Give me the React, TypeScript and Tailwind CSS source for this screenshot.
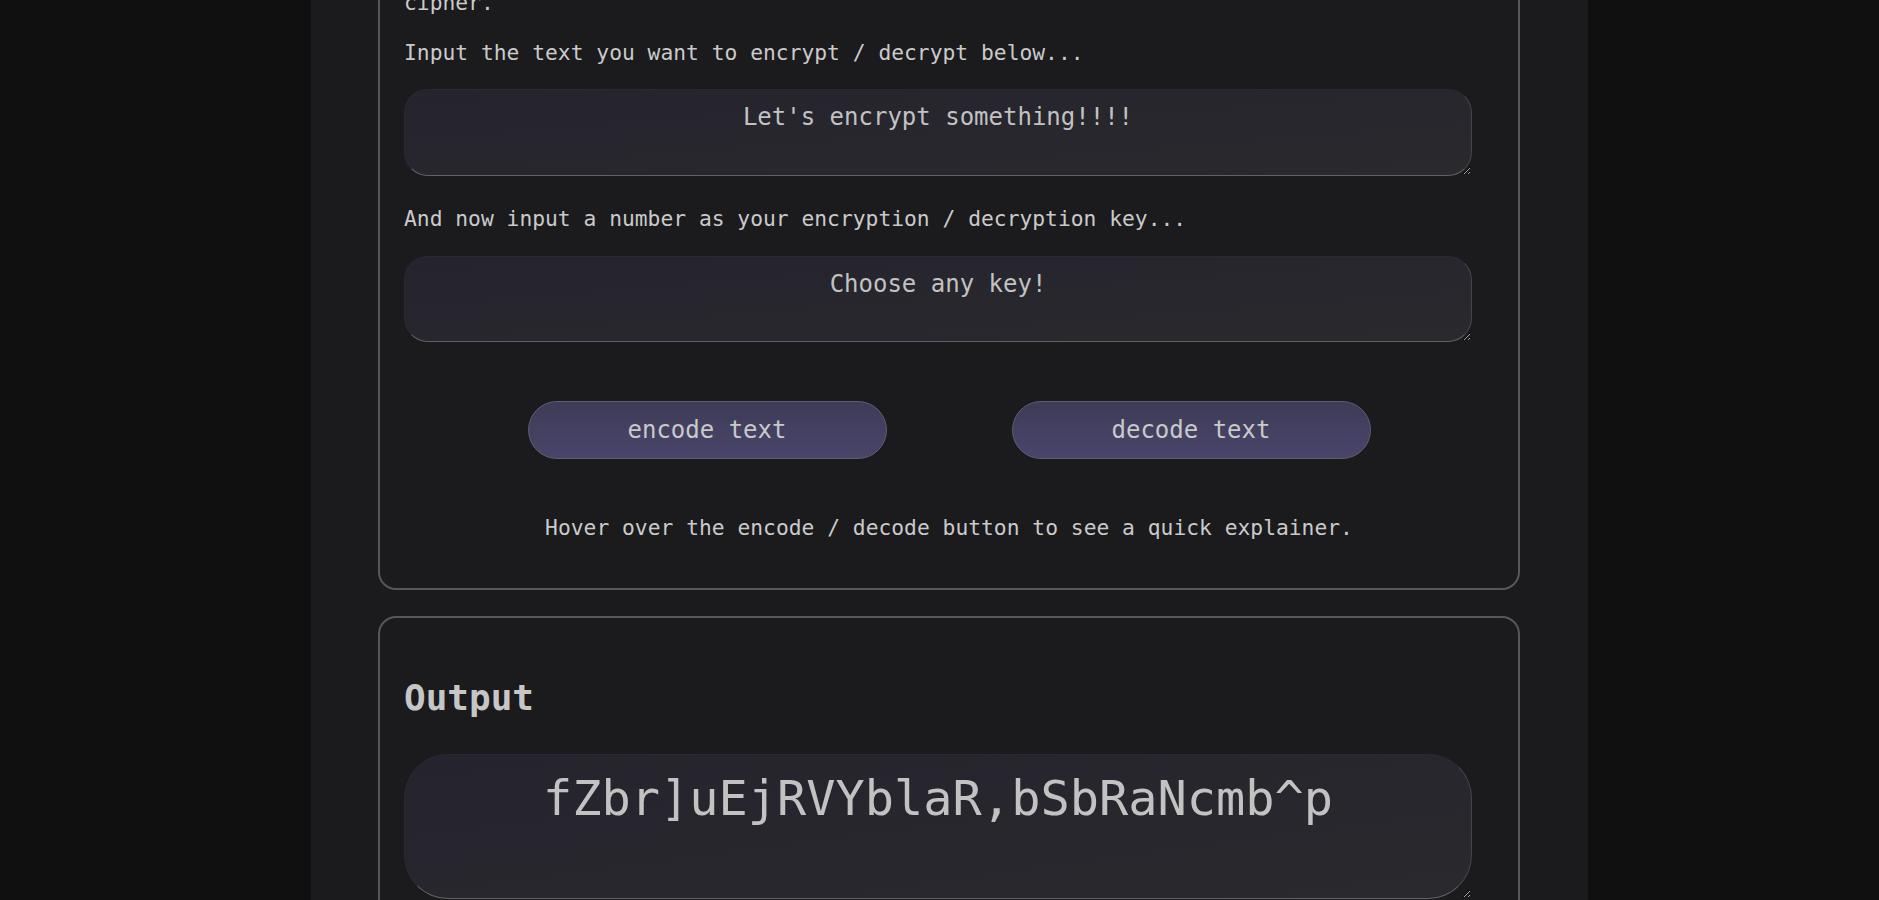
import { useState } from "react";

const mono = "font-['DejaVu_Sans_Mono','Liberation_Mono',monospace]";

export default function App() {
  const [plain, setPlain] = useState("Let's encrypt something!!!!");
  const [key, setKey] = useState("Choose any key!");
  const [output] = useState("fZbr]uEjRVYblaR,bSbRaNcmb^p");

  const fieldClass =
    "block w-[1068px] text-center text-[#c2c2c2] bg-linear-to-br from-[#25242e] to-[#2a292d] border border-t-[#2b2a34] border-l-[#2b2a34] border-r-[#46454d] border-b-[#626168] outline-none";

  return (
    <div className={`h-[900px] overflow-hidden bg-[#101010] ${mono}`}>
      <div className="ml-[311px] w-[1277px] h-full flex flex-col bg-[#1b1a1d] pl-[67px] pr-[68px]">
        {/* Input card */}
        <section className="-mt-[36px] border-2 border-[#575757] rounded-[18px] px-[24px] pt-[24px] pb-[48px] text-[21.3px] leading-[25px] text-[#cacaca]">
          <p>cipher.</p>
          <p className="mt-[25px]">Input the text you want to encrypt / decrypt below...</p>
          <textarea
            value={plain}
            onChange={(e) => setPlain(e.target.value)}
            className={`${fieldClass} mt-[24px] h-[87px] rounded-[24px] pt-[13px] text-[24px] leading-[28px]`}
          />
          <p className="mt-[30px]">And now input a number as your encryption / decryption key...</p>
          <textarea
            value={key}
            onChange={(e) => setKey(e.target.value)}
            className={`${fieldClass} mt-[25px] h-[86px] rounded-[24px] pt-[13px] text-[24px] leading-[28px]`}
          />

          <div className="mt-[59px] flex justify-center gap-[125px]">
            <button className="w-[359px] h-[58px] rounded-full border border-[#5f5c73] bg-linear-to-b from-[#3e3b58] to-[#48456a] text-[24px] text-[#c9c9c9]">
              encode text
            </button>
            <button className="w-[359px] h-[58px] rounded-full border border-[#5f5c73] bg-linear-to-b from-[#3e3b58] to-[#48456a] text-[24px] text-[#c9c9c9]">
              decode text
            </button>
          </div>

          <p className="mt-[56px] text-center">
            Hover over the encode / decode button to see a quick explainer.
          </p>
        </section>

        {/* Output card */}
        <section className="mt-[26px] shrink-0 border-2 border-[#575757] rounded-[18px] px-[24px] pt-[59px] pb-[24px]">
          <h2 className="text-[36px] leading-[42px] font-bold text-[#c6c6c6]">Output</h2>
          <textarea
            readOnly
            value={output}
            className={`${fieldClass} mt-[35px] h-[145px] rounded-[44px] pt-[15px] text-[48.6px] leading-[56px]`}
          />
        </section>
      </div>
    </div>
  );
}
